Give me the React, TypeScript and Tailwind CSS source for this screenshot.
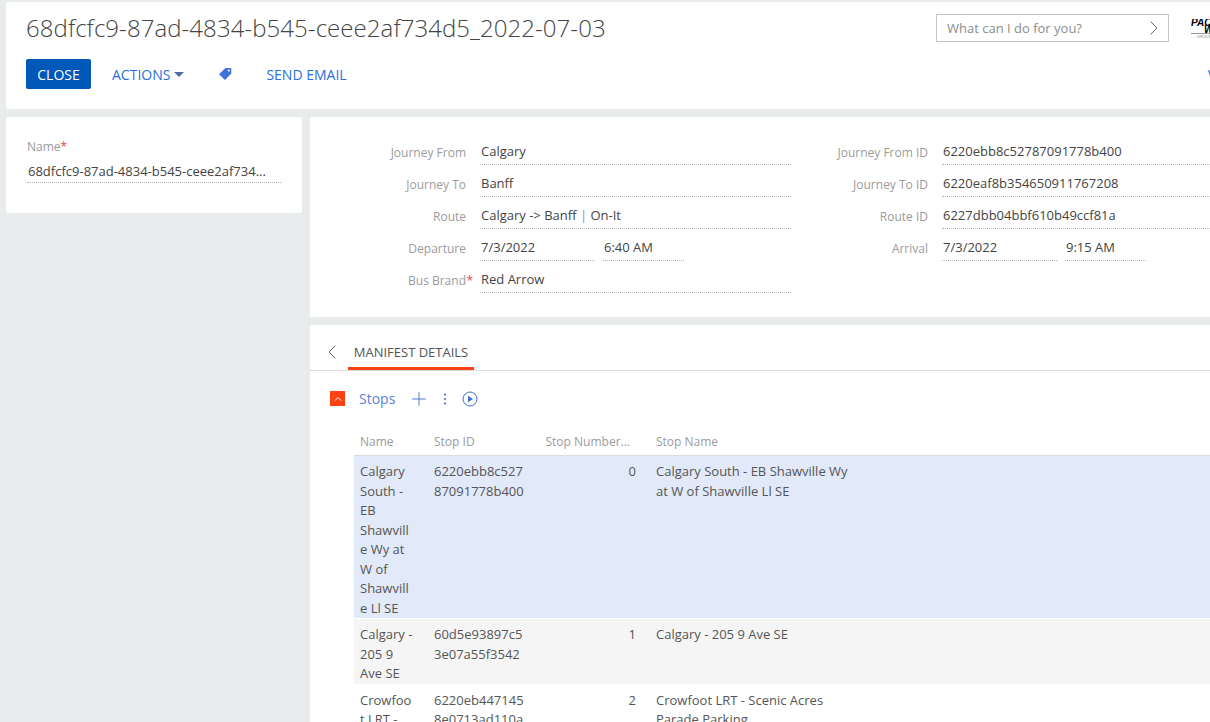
import { ChevronLeft, ChevronRight, ChevronUp, Plus } from "lucide-react";

type Stop = {
  name: string;
  id: string;
  num: number;
  stop: string;
};

const stops: Stop[] = [
  { name: "Calgary South - EB Shawville Wy at W of Shawville Ll SE", id: "6220ebb8c52787091778b400", num: 0, stop: "Calgary South - EB Shawville Wy at W of Shawville Ll SE" },
  { name: "Calgary - 205 9 Ave SE", id: "60d5e93897c53e07a55f3542", num: 1, stop: "Calgary - 205 9 Ave SE" },
  { name: "Crowfoot LRT - Scenic Acres Parade Parking", id: "6220eb4471458e0713ad110a", num: 2, stop: "Crowfoot LRT - Scenic Acres Parade Parking" },
];

const rowColors = ["bg-[#e2e9f8]", "bg-[#f5f5f5]", "bg-white"];

function Field({ label, required, children }: { label: string; required?: boolean; children: React.ReactNode }) {
  return (
    <div className="flex h-8 items-start">
      <div className="relative w-[170px] shrink-0 pt-[7px] pr-[14px] text-right text-[12px] leading-[18px] text-[#9b9b9b]">
        {label}
        {required && <span className="absolute right-[7px] text-[#e8473a]">*</span>}
      </div>
      {children}
    </div>
  );
}

function Value({ width, children }: { width: string; children: React.ReactNode }) {
  return (
    <div className={`${width} h-7 border-b border-dotted border-[#b5b5b5] pt-[4px] pl-[1px] text-[13px] leading-5 text-[#444]`}>
      {children}
    </div>
  );
}

export default function App() {
  return (
    <div className="h-[722px] w-[1210px] overflow-hidden bg-[#e9ecec] pt-[2px] pl-[6px] font-['Open_Sans',sans-serif]">
      {/* header */}
      <div className="h-[107px] w-[1204px] overflow-hidden rounded-l-[2px] bg-white pt-[10px] pl-5">
        <div className="flex h-[47px] items-start">
          <h1 className="mt-[-1px] w-[910px] shrink-0 text-[24px] leading-[34px] font-light tracking-[0.065px] text-[#444]">
            68dfcfc9-87ad-4834-b545-ceee2af734d5_2022-07-03
          </h1>
          <div className="mt-[2px] flex h-7 w-[233px] shrink-0 items-center justify-between border border-[#c4c4c4] pr-[2px] pl-[10px] text-[13px] text-[#8c8c8c]">
            <span className="pt-[1px]">What can I do for you?</span>
            <ChevronRight size={24} strokeWidth={1} className="text-[#666]" />
          </div>
          <div className="mt-[7px] ml-[22px] w-[19px] shrink-0 overflow-hidden">
            <div className="w-[60px] text-[10px] leading-[7px] font-bold text-black italic font-['Liberation_Sans',sans-serif]">PAC</div>
            <div className="w-[60px] pl-[13px] text-[10px] leading-[7px] font-bold text-black italic font-['Liberation_Sans',sans-serif]">W</div>
            <div className="h-px w-[20px] bg-[#999]" />
            <div className="pl-[6px] text-[4px] leading-[5px] text-[#888]">GROUP</div>
          </div>
        </div>
        <div className="flex h-[30px] items-center whitespace-nowrap text-[14px] text-[#2a6fdc]">
          <button className="h-[30px] w-[65px] shrink-0 rounded-[2px] bg-[#0058b8] pt-[1px] text-[14px] text-white">CLOSE</button>
          <span className="ml-[21px] shrink-0 pt-[1px]">ACTIONS</span>
          <svg width="10" height="5" viewBox="0 0 10 5" className="ml-[4px] shrink-0">
            <path d="M0 0h10L5 5z" fill="#4a6da7" />
          </svg>
          <svg width="14" height="14" viewBox="0 0 14 14" className="ml-[34px] shrink-0">
            <path d="M7.5 1h5a.8.8 0 0 1 .8.8v4.6L7 13 1 7.2zM10.8 2.6a1 1 0 1 0 .01 0z" fill="#3f73d9" fillRule="evenodd" />
          </svg>
          <span className="ml-[34px] shrink-0 pt-[1px]">SEND EMAIL</span>
          <span className="ml-[861px] shrink-0 pt-[1px]">VIEW</span>
        </div>
      </div>

      <div className="mt-2 flex gap-2">
        {/* left panel */}
        <div className="h-[96px] w-[296px] shrink-0 rounded-[2px] bg-white pt-[21px] pl-[21px]">
          <div className="text-[12px] leading-[18px] text-[#9b9b9b]">
            Name<span className="text-[#e8473a]">*</span>
          </div>
          <div className="mt-[-1px] h-[28px] w-[254px] border-b border-dotted border-[#b5b5b5] pt-[8px] pl-[1px] text-[13px] leading-[17px] text-[#444]">
            68dfcfc9-87ad-4834-b545-ceee2af734...
          </div>
        </div>

        <div className="w-[900px] shrink-0">
          {/* journey form */}
          <div className="flex h-[200px] bg-white pt-[20px]">
            <div className="w-[481px] shrink-0">
              <Field label="Journey From"><Value width="w-[311px]">Calgary</Value></Field>
              <Field label="Journey To"><Value width="w-[311px]">Banff</Value></Field>
              <Field label="Route">
                <Value width="w-[311px]">Calgary -&gt; Banff <span className="text-[#5b9bd5]">|</span> On-It</Value>
              </Field>
              <Field label="Departure">
                <div className="flex gap-2">
                  <Value width="w-[115px]">7/3/2022</Value>
                  <Value width="w-[81px]">6:40 AM</Value>
                </div>
              </Field>
              <Field label="Bus Brand" required><Value width="w-[311px]">Red Arrow</Value></Field>
            </div>
            <div className="ml-[-19px] w-[438px] shrink-0">
              <Field label="Journey From ID"><Value width="w-[268px]">6220ebb8c52787091778b400</Value></Field>
              <Field label="Journey To ID"><Value width="w-[268px]">6220eaf8b354650911767208</Value></Field>
              <Field label="Route ID"><Value width="w-[268px]">6227dbb04bbf610b49ccf81a</Value></Field>
              <Field label="Arrival">
                <div className="flex gap-2">
                  <Value width="w-[115px]">7/3/2022</Value>
                  <Value width="w-[81px]">9:15 AM</Value>
                </div>
              </Field>
            </div>
          </div>

          {/* manifest */}
          <div className="mt-2 h-[400px] bg-white">
            <div className="flex h-[46px] items-end border-b border-[#dcdcdc] pl-[10px]">
              <ChevronLeft size={24} strokeWidth={1} className="mb-[6px] text-[#666]" />
              <div className="ml-[4px] h-[46px] w-[126px] border-b-[3px] border-[#ff4013] pt-[18px] text-center text-[13px] leading-[20px] text-[#555]">
                MANIFEST DETAILS
              </div>
            </div>

            <div className="mt-[17px] flex h-[21px] items-center pl-5">
              <div className="flex h-[15px] w-[15px] items-center justify-center bg-[#ff4013]">
                <ChevronUp size={12} strokeWidth={2} className="text-white" />
              </div>
              <span className="ml-[14px] text-[14px] text-[#5a7fd6]">Stops</span>
              <Plus size={22} strokeWidth={1} className="ml-[13px] text-[#3f6fd1]" />
              <svg width="4" height="12" viewBox="0 0 4 12" className="ml-[13px]">
                <circle cx="2" cy="1.5" r="1.1" fill="#3f6fd1" />
                <circle cx="2" cy="6" r="1.1" fill="#3f6fd1" />
                <circle cx="2" cy="10.5" r="1.1" fill="#3f6fd1" />
              </svg>
              <svg width="16" height="16" viewBox="0 0 16 16" className="ml-[15px]">
                <circle cx="8" cy="8" r="7" fill="none" stroke="#3f6fd1" />
                <path d="M6 4.8v6.4L11 8z" fill="#3f6fd1" />
              </svg>
            </div>

            <div className="mt-[22px] ml-[44px] w-[856px]">
              <div className="grid h-[25px] grid-cols-[74px_111px_97px_1fr] border-b border-[#dcdcdc] pt-[1px] text-[12px] leading-5 text-[#9b9b9b]">
                <div className="pl-[6px]">Name</div>
                <div className="pl-[6px]">Stop ID</div>
                <div className="truncate pr-[6px] text-right">Stop Number...</div>
                <div className="pl-[20px]">Stop Name</div>
              </div>
              {stops.map((row, i) => (
                <div
                  key={row.id}
                  className={`grid grid-cols-[74px_111px_97px_1fr] border-b border-white pt-[6px] text-[13px] leading-[19.5px] text-[#555] ${rowColors[i]}`}
                >
                  <div className="pr-[12px] pl-[6px] wrap-anywhere">{row.name}</div>
                  <div className="pr-[14px] pl-[6px] wrap-anywhere">{row.id}</div>
                  <div className="text-right">{row.num}</div>
                  <div className="w-[225px] pl-[20px]">{row.stop}</div>
                </div>
              ))}
            </div>
          </div>
        </div>
      </div>
    </div>
  );
}
